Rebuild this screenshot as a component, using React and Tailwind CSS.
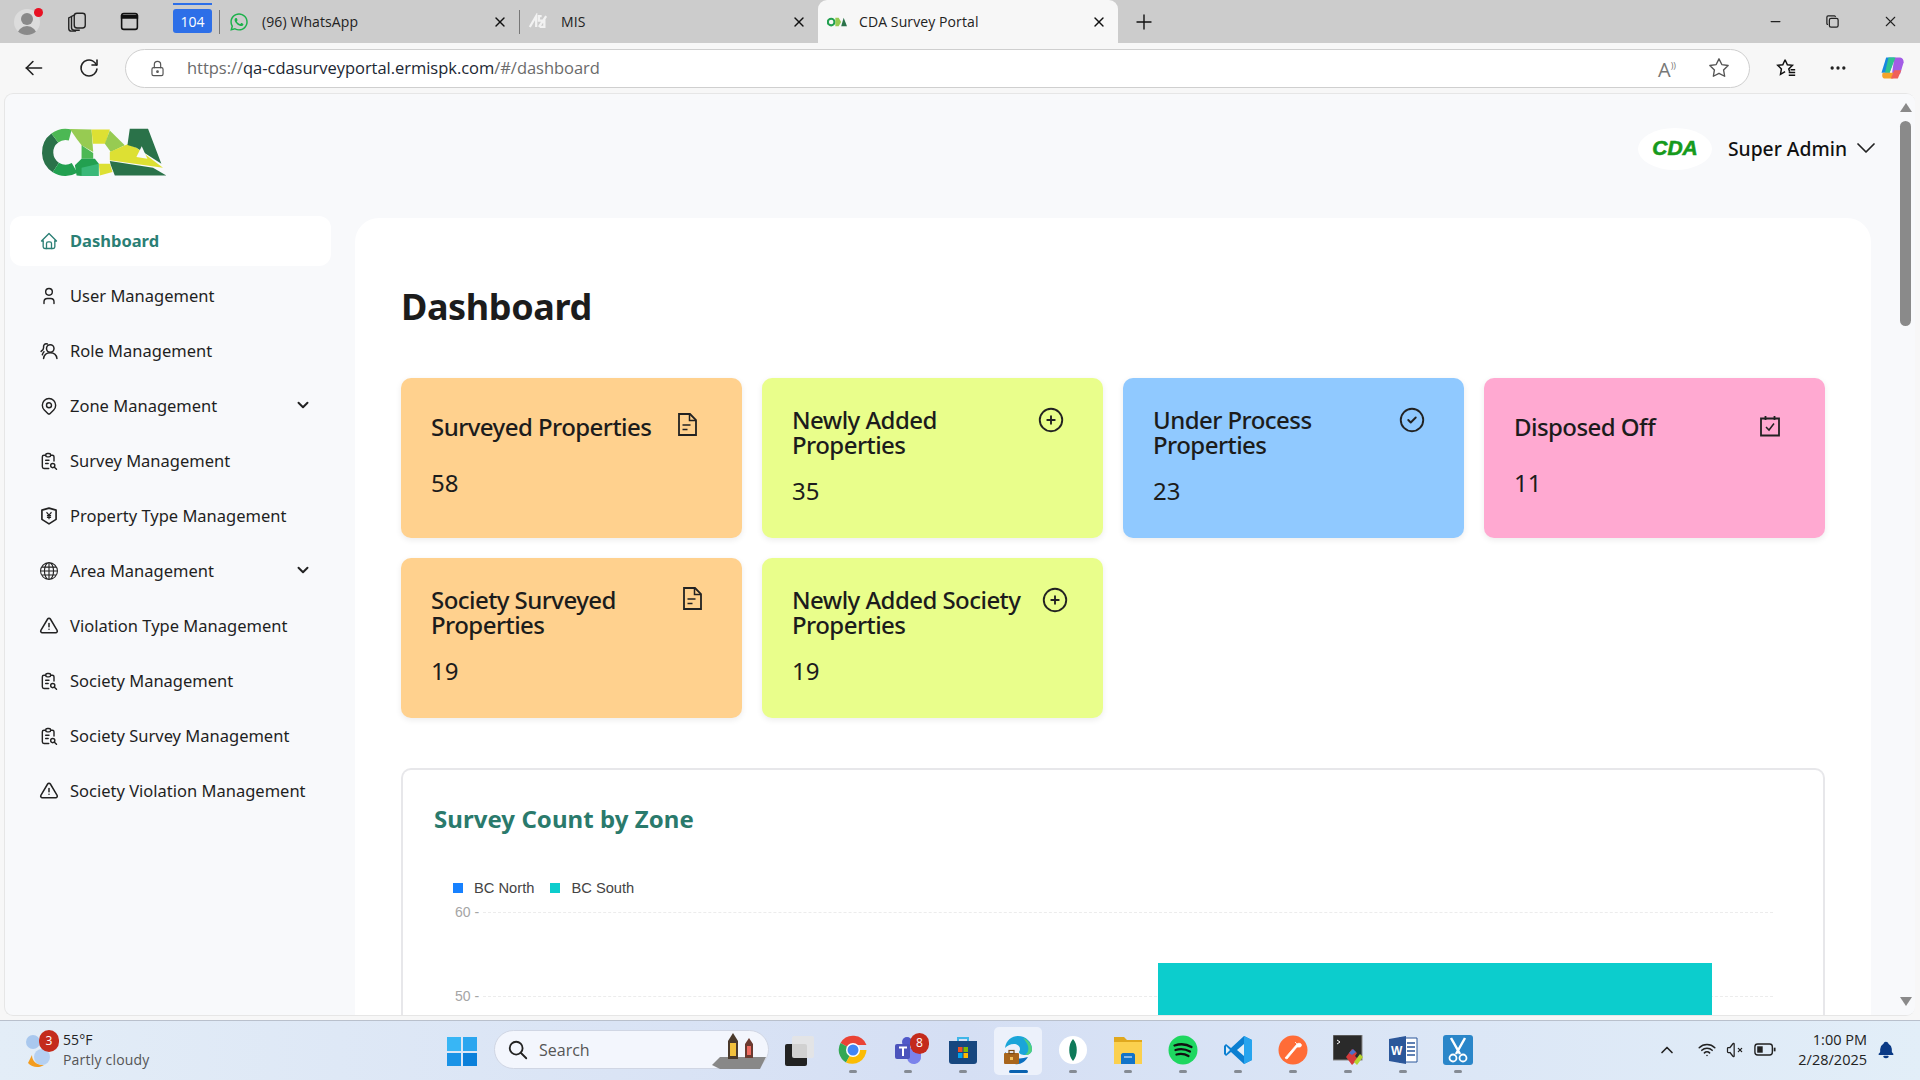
import React from "react";
import { TbHome, TbUser, TbMapPin, TbReportSearch, TbAlertTriangle, TbCirclePlus, TbCircleCheck, TbChevronDown, TbSearch, TbChevronUp, TbWifi, TbVolume3, TbBellFilled, TbStar, TbDots, TbReload, TbArrowLeft, TbLock, TbX, TbPlus, TbMinus, TbCopy } from "react-icons/tb";
import { BsGlobe } from "react-icons/bs";
import { FaWhatsapp } from "react-icons/fa";

const arc = (a1, a2, r = 54, cx = 132, cy = 126) => {
  const p = (a) => [cx + r * Math.cos((a * Math.PI) / 180), cy + r * Math.sin((a * Math.PI) / 180)];
  const [x1, y1] = p(a1);
  const [x2, y2] = p(a2);
  return `M${x1} ${y1}A${r} ${r} 0 ${Math.abs(a2 - a1) > 180 ? 1 : 0} 1 ${x2} ${y2}`;
};

function Logo() {
  return (
    <svg viewBox="55 50 385 150" className="w-[128px] h-[50px]">
      <path d={arc(123, 233)} fill="none" stroke="#2a7249" strokeWidth="34" />
      <path d={arc(233, 285)} fill="none" stroke="#4cb854" strokeWidth="34" />
      <path d={arc(60, 123)} fill="none" stroke="#22a050" strokeWidth="34" />
      <polygon points="145,56 210,57 215,125 180,105 165,85" fill="#97cb52" />
      <polygon points="180,105 215,128 215,145 180,145" fill="#4cb854" />
      <polygon points="160,165 180,145 220,145 232,160 180,197 165,196" fill="#22a050" />
      <polygon points="180,172 232,160 232,197 180,197" fill="#3ab878" />
      <polygon points="210,57 265,57 252,100 214,100" fill="#dde033" />
      <polygon points="265,60 310,105 268,125 250,100" fill="#97cb52" />
      <polygon points="232,160 265,160 273,185 235,196" fill="#dde033" />
      <polygon points="265,125 318,102 345,112 425,172 265,150" fill="#dde033" />
      <polygon points="325,55 380,55 420,160 345,112 318,104" fill="#2a7249" />
      <polygon points="265,152 395,172 435,196 325,196 280,196 268,165" fill="#2a7249" />
      <polygon points="345,140 378,145 361,108" fill="#f8f9fb" />
    </svg>
  );
}

function ShieldYen() {
  return (
    <svg viewBox="0 0 24 24" className="w-[20px] h-[20px]" fill="none" stroke="#222" strokeWidth="2" strokeLinejoin="round">
      <path d="M3.5 5 12 2.5 20.5 5v11L12 21.5 3.5 16z" />
      <path d="M9 7.5 12 11l3-3.5M12 11v5M9.5 11.5h5M9.5 13.7h5" strokeWidth="1.4" />
    </svg>
  );
}

function RoleIcon() {
  return (
    <svg viewBox="0 0 24 24" className="w-[20px] h-[20px]" fill="none" stroke="#222" strokeWidth="1.8" strokeLinecap="round">
      <circle cx="13.5" cy="9" r="4.5" />
      <path d="M5.500 21c.5-4.500 3.500-7 8-7s7.500 2.500 8 7" />
      <path d="M10 3.500C7 2.500 5 5 5.500 8c.2 1.500-1 3-3 4.500M6 13c-1 1-1.500 2-2 3.500" />
    </svg>
  );
}

function DocIcon() {
  return (
    <svg viewBox="0 0 19 23" className="w-[19px] h-[23px]" fill="none" stroke="#222" strokeWidth="1.800">
      <path d="M1 1h11l6 6v15H1z" />
      <path d="M11.500 1v6.500H18" strokeWidth="1.500" />
      <path d="M4.500 12h8M4.500 16.500h5" strokeWidth="1.600" />
    </svg>
  );
}

function CalCheck() {
  return (
    <svg viewBox="0 0 24 24" className="w-[24px] h-[24px]" fill="none" stroke="#222" strokeWidth="1.8">
      <path d="M3 4.500h18v17H3zM7.500 2v4M16.500 2v4" />
      <path d="m8 13 3 3 5-6.500" strokeWidth="1.5" />
    </svg>
  );
}

const nav = [
  ["User Management", <TbUser size={24} color="#222" strokeWidth={1.7} />],
  ["Role Management", <RoleIcon />],
  ["Zone Management", <TbMapPin size={24} color="#222" strokeWidth={1.7} />, true],
  ["Survey Management", <TbReportSearch size={22} color="#222" strokeWidth={1.7} />],
  ["Property Type Management", <ShieldYen />],
  ["Area Management", <BsGlobe size={18} color="#222" />, true],
  ["Violation Type Management", <TbAlertTriangle size={22} color="#222" strokeWidth={1.8} />],
  ["Society Management", <TbReportSearch size={22} color="#222" strokeWidth={1.7} />],
  ["Society Survey Management", <TbReportSearch size={22} color="#222" strokeWidth={1.7} />],
  ["Society Violation Management", <TbAlertTriangle size={22} color="#222" strokeWidth={1.8} />],
];

function Card({ title, count, color, icon, iconClass, two }) {
  return (
    <div className={`h-[160px] rounded-[10px] shadow-[0_2px_6px_rgba(0,0,0,0.08)] px-[30px] flex flex-col ${color} ${two ? "pt-[29px]" : "pt-[36px]"}`}>
      <div className="flex justify-between items-start">
        <div className="text-[24px] leading-[25px] font-medium text-[#1c1c1c] tracking-[-0.55px]">{title}</div>
        <div className={iconClass}>{icon}</div>
      </div>
      <div className={`text-[24px] leading-[28px] text-[#1c1c1c] ${two ? "mt-[20px]" : "mt-[30px]"}`}>{count}</div>
    </div>
  );
}

function Tab({ icon, title, active, w }) {
  return (
    <div className={`h-[43px] flex items-center pr-[11px] ${w} ${active ? "bg-[#f7f7f7] rounded-t-[9px] pl-[8px]" : "pl-[8px]"}`}>
      <div className="w-[22px] flex justify-center shrink-0">{icon}</div>
      <div className={`flex-1 text-[14px] text-[#222] font-['Open_Sans',sans-serif] tracking-[0.1px] ${active ? "ml-[11px]" : "ml-[12px]"}`}>{title}</div>
      <TbX size={16} color="#111" />
    </div>
  );
}

function Dot({ on }) {
  return <div className={`h-[3px] rounded-full ${on ? "w-[19px] bg-[#0a62b0]" : "w-[8px] bg-[#858b94]"}`} />;
}

function TaskIcon({ children, active }) {
  return (
    <div className={`w-[48px] h-[48px] rounded-[5px] flex flex-col items-center justify-between pt-[8px] pb-[2px] mx-[3.500px] ${active ? "bg-[#ecf1fb]" : ""}`}>
      <div className="w-[30px] h-[30px] flex items-center justify-center relative">{children}</div>
      <Dot on={active} />
    </div>
  );
}

const Badge = ({ n, cls }) => (
  <div className={`absolute rounded-full bg-[#c42b1c] text-white text-[12px] flex items-center justify-center font-['Open_Sans',sans-serif] ${cls}`}>{n}</div>
);

export default function App() {
  return (
    <div className="w-[1920px] h-[1080px] overflow-hidden flex flex-col font-['Noto_Sans',sans-serif] bg-[#f7f7f7]">
      {/* Tab strip */}
      <div className="h-[43px] bg-[#cccccc] flex shrink-0">
        <div className="w-[173px] flex items-center pl-[14px] shrink-0">
          <div className="relative w-[26px] h-[26px] shrink-0">
            <div className="w-[26px] h-[26px] rounded-full bg-[#dcdcdc] overflow-hidden">
              <div className="w-[12px] h-[12px] rounded-full bg-[#8a8a8a] mx-auto mt-[4px]" />
              <div className="w-[20px] h-[12px] rounded-t-full bg-[#8a8a8a] mx-auto mt-[1px]" />
            </div>
            <div className="absolute w-[9px] h-[9px] rounded-full bg-[#e81123] left-[20px] -top-[1px]" />
          </div>
          <svg viewBox="0 0 24 24" className="w-[22px] h-[22px] ml-[26px] shrink-0" fill="none" stroke="#222" strokeWidth="1.5"><rect x="9" y="2.500" width="12" height="16" rx="3" /><path d="M9 4.500 6 6v12a3 3 0 0 0 3 3h6" /><path d="M6 6 3 7.500V19a3 3 0 0 0 3 3h5" /></svg>
          <svg viewBox="0 0 24 24" className="w-[21px] h-[21px] ml-[31px] shrink-0" fill="none" stroke="#111" strokeWidth="1.8"><rect x="3" y="3" width="18" height="18" rx="2.500" /><path d="M3 5.500h18V8H3z" fill="#111" /></svg>
        </div>
        <div className="w-[39px] shrink-0 pt-[3px]">
          <div className="h-[2px] bg-[#2d6fe8]" />
          <div className="mt-[4px] h-[24px] bg-[#2d6fe8] rounded-[3px] flex items-center justify-center text-[14px] text-white font-['Open_Sans',sans-serif]">104</div>
        </div>
        <div className="w-[8px] flex items-center shrink-0 pl-[7px]"><div className="w-px h-[24px] bg-[#777] shrink-0" /></div>
        <Tab w="w-[299px]" title="(96) WhatsApp" icon={<FaWhatsapp size={20} color="#1bb14a" />} />
        <div className="w-0 flex items-center shrink-0"><div className="w-px h-[24px] bg-[#777] shrink-0" /></div>
        <Tab w="w-[299px]" title="MIS" icon={
          <svg viewBox="0 0 22 18" className="w-[20px] h-[17px]" fill="none" stroke="#f2f2f2" strokeWidth="2.500"><path d="M2 15 9 3v12M12 15l8-12M15 3h-3v5h6v7h-5" /></svg>
        } />
        <Tab active w="w-[300px]" title="CDA Survey Portal" icon={
          <svg viewBox="0 0 24 12" className="w-[20px] h-[10px]"><circle cx="5" cy="6" r="4" fill="none" stroke="#22a050" strokeWidth="2.500" /><path d="M10 1h4l3 5-3 5h-4z" fill="#97cb52" /><path d="M17 11 20 1l4 10z" fill="#2a7249" /></svg>
        } />
        <div className="ml-[14px] flex items-center"><TbPlus size={24} color="#111" strokeWidth={1.4} /></div>
        <div className="flex-1" />
        <div className="flex items-center pr-[21px] gap-[42px]">
          <TbMinus size={15} color="#222" />
          <TbCopy size={15} color="#222" />
          <TbX size={17} color="#222" strokeWidth={1.5} />
        </div>
      </div>

      {/* Address row */}
      <div className="h-[50px] flex items-center shrink-0 bg-[#f7f7f7]">
        <div className="w-[125px] flex items-center pl-[21px] gap-[30px] shrink-0">
          <TbArrowLeft size={26} color="#222" strokeWidth={1.5} />
          <TbReload size={24} color="#222" strokeWidth={1.6} />
        </div>
        <div className="w-[1625px] h-[39px] rounded-full bg-white border border-[#cfcfcf] flex items-center pl-[22px] pr-[19px] shrink-0">
          <TbLock size={19} color="#555" strokeWidth={1.5} />
          <div className="ml-[20px] flex-1 text-[16.500px] tracking-[-0.03px] font-['Open_Sans',sans-serif] text-[#6b6b6b]">https://<span className="text-[#1c2733]">qa-cdasurveyportal.ermispk.com</span>/#/dashboard</div>
          <div className="text-[20px] leading-[20px] text-[#777] mr-[32px] font-['Open_Sans',sans-serif]">A<span className="text-[9px] align-super">))</span></div>
          <TbStar size={22} color="#555" strokeWidth={1.5} />
        </div>
        <div className="flex-1 flex items-center justify-between pl-[25px] pr-[14px]">
          <svg viewBox="0 0 24 24" className="w-[22px] h-[22px]" fill="none" stroke="#111" strokeWidth="1.6"><path d="M11 3l2.500 5.500 5.500.5-4 4 1 3M11 3 8.500 8.500 3 9l4 4-1 6 5-3" /><path d="M15 17h7M15 20h7M17 14h5" /></svg>
          <TbDots size={20} color="#222" />
          <svg viewBox="0 0 24 24" className="w-[28px] h-[28px]"><path d="M7 3h7l-4 13H3z" fill="#1688e0" /><path d="M14 3h5c2 0 3 2 3 4l-3 10h-7z" fill="#a35ce6" /><path d="M9 3h6l-5 13-4 0z" fill="#2fc28f" /><path d="M4 16h11l-2 5H6c-2 0-3-2-2-5z" fill="#f4a32a" /><path d="M14 14h6l-3 7h-6z" fill="#f0605a" /></svg>
        </div>
      </div>

      {/* Page */}
      <div className="flex-1 min-h-0 pl-[4px] pr-[5px] pb-[4px] bg-[#f7f7f7]">
        <div className="h-full flex overflow-hidden rounded-[9px] border border-[#e6e6e6] border-r-0 bg-[#f8f9fb]">
          <aside className="w-[350px] shrink-0">
            <div className="h-[122px] pl-[35px] pt-[33px]"><Logo /></div>
            <nav className="pl-[5px] flex flex-col gap-[5px] text-[16.500px] text-[#1f1f1f]">
              <div className="w-[321px] h-[50px] rounded-[12px] bg-white flex items-center pl-[29px] gap-[11px]">
                <div className="w-[20px] flex justify-center"><TbHome size={24} color="#2b7f75" strokeWidth={1.6} /></div>
                <span className="font-bold text-[#2b7f75] mt-[1px]">Dashboard</span>
              </div>
              {nav.map(([label, icon, chev]) => (
                <div key={label} className="w-[321px] h-[50px] flex items-center pl-[29px] gap-[11px]">
                  <div className="w-[20px] flex justify-center">{icon}</div>
                  <span className="flex-1 mt-[1px]">{label}</span>
                  {chev && <TbChevronDown size={18} color="#222" strokeWidth={2.600} className="mr-[19px] -mt-[3px]" />}
                </div>
              ))}
            </nav>
          </aside>
          <main className="flex-1 min-w-0 flex flex-col">
            <div className="h-[124px] shrink-0 flex items-start justify-end -mr-[11px] pt-[34px]">
              <div className="w-[74px] h-[42px] rounded-[50%] bg-white flex items-center justify-center pb-[3px] text-[21px] font-bold italic font-['Liberation_Sans',sans-serif] text-[#169a1c] [-webkit-text-stroke:0.6px_#169a1c]">CDA</div>
              <div className="ml-[16px] text-[19.300px] font-medium text-[#111] mt-[7px]">Super Admin</div>
              <TbChevronDown size={32} color="#222" strokeWidth={1.3} className="ml-[3px] mt-[4px]" />
            </div>
            <div className="flex-1 bg-white rounded-t-[24px] px-[46px] overflow-hidden">
              <h1 className="text-[36px] leading-[46px] font-bold text-[#1c1c1c] mt-[66px] tracking-[-0.4px]">Dashboard</h1>
              <div className="grid grid-cols-4 gap-[20px] mt-[48px]">
                <Card title="Surveyed Properties" count="58" color="bg-[#ffd18e]" iconClass="mr-[15px] -mt-[1px]" icon={<DocIcon />} />
                <Card two title={<>Newly Added<br />Properties</>} count="35" color="bg-[#e9fe8b]" iconClass="mr-[7px] -mt-[2px]" icon={<TbCirclePlus size={30} color="#222" strokeWidth={1.5} />} />
                <Card two title={<>Under Process<br />Properties</>} count="23" color="bg-[#90c9ff]" iconClass="mr-[7px] -mt-[2px]" icon={<TbCircleCheck size={30} color="#222" strokeWidth={1.5} />} />
                <Card title="Disposed Off" count="11" color="bg-[#ffa9d1]" iconClass="mr-[13px] mt-0" icon={<CalCheck />} />
                <Card two title={<>Society Surveyed<br />Properties</>} count="19" color="bg-[#ffd18e]" iconClass="mr-[10px]" icon={<DocIcon />} />
                <Card two title={<>Newly Added Society<br />Properties</>} count="19" color="bg-[#e9fe8b]" iconClass="mr-[3px] -mt-[2px]" icon={<TbCirclePlus size={30} color="#222" strokeWidth={1.5} />} />
              </div>
              <div className="mt-[50px] rounded-t-[10px] border-2 border-b-0 border-[#e7e7ea] h-[400px] pl-[31px] pt-[32px]">
                <h2 className="text-[24px] leading-[34px] font-bold text-[#2a7a6c] tracking-[0.05px]">Survey Count by Zone</h2>
                <div className="mt-[43px] ml-[19px] flex items-center text-[14.700px] leading-[18px] text-[#444] font-['Liberation_Sans',sans-serif]">
                  <div className="w-[10px] h-[10px] bg-[#1781ff]" />
                  <span className="ml-[11px]">BC North</span>
                  <div className="w-[10px] h-[10px] bg-[#0ccdcd] ml-[16px]" />
                  <span className="ml-[11px]">BC South</span>
                </div>
                <div className="mt-[6px] ml-[21px] mr-[50px] relative text-[14px] text-[#a5a5a5] font-['Liberation_Sans',sans-serif]">
                  <div className="flex items-center h-[18px]">
                    <span>60 -</span>
                    <div className="flex-1 ml-[4px] border-t border-dashed border-[#ececec]" />
                  </div>
                  <div className="flex items-center h-[18px] mt-[66px]">
                    <span>50 -</span>
                    <div className="flex-1 ml-[4px] border-t border-dashed border-[#ececec]" />
                  </div>
                  <div className="absolute left-[703px] top-[60px] w-[554px] h-[100px] bg-[#0ccdcd]" />
                </div>
              </div>
            </div>
          </main>
          <div className="w-[44px] shrink-0 flex">
            <div className="flex-1" />
            <div className="w-[19px] bg-[#f8f9fb] flex flex-col items-center pt-[9px]">
              <div className="w-0 h-0 border-x-[6px] border-x-transparent border-b-[9px] border-b-[#8a8a8a]" />
              <div className="w-[11px] h-[205px] rounded-full bg-[#8a8a8a] mt-[9px]" />
              <div className="flex-1" />
              <div className="w-0 h-0 border-x-[6px] border-x-transparent border-t-[9px] border-t-[#8a8a8a] mb-[9px]" />
            </div>
          </div>
        </div>
      </div>

      {/* Taskbar */}
      <div className="h-[60px] shrink-0 border-t border-[#b9c0cc] bg-gradient-to-r from-[#e3edf7] via-[#d5dff4] to-[#e2eef8] flex items-center relative font-['Open_Sans',sans-serif]">
        <div className="w-[447px] flex items-center pl-[24px] shrink-0">
          <div className="relative w-[36px] h-[40px]">
            <svg viewBox="0 0 36 40" className="w-[36px] h-[40px]"><path d="M4 32c4 5 12 5 16 2-8 0-12-4-12-10z" fill="#f39c1f" /><circle cx="9" cy="11" r="7" fill="#a9c8ee" /><circle cx="18" cy="26" r="8" fill="#b5d0f2" /></svg>
            <Badge n="3" cls="w-[20px] h-[22px] left-[15px] -top-[1px]" />
          </div>
          <div className="ml-[3px] text-[14px] leading-[20px] text-[#222] -mt-[2px]">
            <div className="tracking-[0.1px]">55°F</div>
            <div className="text-[#555] tracking-[0.2px]">Partly cloudy</div>
          </div>
        </div>
        <svg viewBox="0 0 30 30" className="w-[30px] h-[30px] shrink-0"><path d="M0 1h14v14H0z" fill="#38b6f5" /><path d="M16 1h14v14H16z" fill="#2ba6ef" /><path d="M0 17h14v13H0z" fill="#1a93e6" /><path d="M16 17h14v13H16z" fill="#0b80da" /></svg>
        <div className="ml-[17px] w-[275px] h-[39px] rounded-full bg-[#f3f6fd] border border-[#d0d6e4] flex items-center pl-[12px] relative shrink-0 -mt-[2px]">
          <TbSearch size={22} color="#222" />
          <span className="ml-[10px] text-[16px] text-[#555]">Search</span>
          <svg viewBox="0 0 60 44" className="absolute right-0 -top-[4px] w-[60px] h-[44px]"><path d="M4 38 12 30h46l-6 12H12z" fill="#888" /><path d="M20 14l5-8 5 8v18H20z" fill="#4a3a2c" /><rect x="22" y="16" width="6" height="13" fill="#f2c13d" /><path d="M37 17l4-6 4 6v14h-8z" fill="#6a3a30" /><rect x="39" y="19" width="4" height="9" fill="#ee6a60" /></svg>
        </div>
        <div className="ml-[11px] w-[40px] flex items-center justify-center shrink-0">
          <div className="relative w-[30px] h-[30px]">
            <div className="absolute left-0 top-[8px] w-[22px] h-[22px] bg-[#222] rounded-[2px]" />
            <div className="absolute left-[7px] top-0 w-[22px] h-[22px] bg-[#e4e4e4]/90 rounded-[2px]" />
          </div>
        </div>
        <div className="flex ml-[5.500px]">
          <TaskIcon>
            <svg viewBox="0 0 30 30" className="w-[30px] h-[30px]"><path d="M15 15 2.500 8A14.500 14.500 0 0 1 28.500 10H15z" fill="#ea4335" /><path d="M15 15 8 27.500A14.500 14.500 0 0 1 2.500 8z" fill="#34a853" /><path d="M15 15h13.500A14.500 14.500 0 0 1 8 27.500z" fill="#fbbc05" /><circle cx="15" cy="15" r="7" fill="#fff" /><circle cx="15" cy="15" r="5.500" fill="#4285f4" /></svg>
          </TaskIcon>
          <TaskIcon>
            <svg viewBox="0 0 30 30" className="w-[30px] h-[30px]"><circle cx="22" cy="9" r="4" fill="#7b83eb" /><path d="M13 13h15v8a7 7 0 0 1-14 2z" fill="#7b83eb" /><circle cx="14" cy="7" r="5" fill="#5059c9" /><rect x="2" y="9" width="15" height="15" rx="2" fill="#4b53bc" /><path d="M6 12.500h8M10 12.500V21" stroke="#fff" strokeWidth="2" /></svg>
            <Badge n="8" cls="w-[19px] h-[21px] left-[17px] -top-[2px]" />
          </TaskIcon>
          <TaskIcon>
            <svg viewBox="0 0 30 30" className="w-[30px] h-[30px]"><path d="M10 7V3h10v4" fill="none" stroke="#3fb6e8" strokeWidth="2" /><path d="M1 6h28v20a3 3 0 0 1-3 3H4a3 3 0 0 1-3-3z" fill="#17477f" /><rect x="10" y="12" width="4.500" height="5" fill="#f25022" /><rect x="15.500" y="12" width="4.500" height="5" fill="#7fba00" /><rect x="10" y="18" width="4.500" height="5" fill="#00a4ef" /><rect x="15.500" y="18" width="4.500" height="5" fill="#ffb900" /></svg>
          </TaskIcon>
          <TaskIcon active>
            <svg viewBox="0 0 30 30" className="w-[30px] h-[30px]"><path d="M2 13C3 5 9 1 15 1c8 0 14 6 14 13 0 4-3 6-7 6-3 0-6-1-6-3 0-1 1-1 1-3 0-3-3-5-6-5-4 0-7 2-9 4z" fill="#1aa5d9" /><path d="M20 3c5 2 9 6 9 11 0 4-3 6-7 6 3-2 4-5 3-9-1-3-3-6-5-8z" fill="#4fd17e" /><path d="M12 29c-5-1-10-5-10-12 3 3 6 4 9 4 2 3 7 3 14 1-3 5-8 8-13 7z" fill="#0b6fc0" /><rect x="1" y="18" width="15" height="11" rx="1" fill="#a8651c" /><rect x="6" y="15.500" width="5" height="3" fill="none" stroke="#7a4a14" strokeWidth="1.200" /><rect x="7" y="22" width="3" height="3" fill="#f4c15c" /></svg>
          </TaskIcon>
          <TaskIcon>
            <svg viewBox="0 0 30 30" className="w-[30px] h-[30px]"><circle cx="15" cy="15" r="14" fill="#fff" /><path d="M15 4c5 5 5 17 0 22-5-5-5-17 0-22z" fill="#0f7a5a" /></svg>
          </TaskIcon>
          <TaskIcon>
            <svg viewBox="0 0 30 30" className="w-[30px] h-[30px]"><path d="M1 2h10l3 3h15v4H1z" fill="#e0a81e" /><path d="M1 7h28v22H1z" fill="#fbd04e" /><path d="M8 20c0-1 1-2 2-2h10c1 0 2 1 2 2v9H8z" fill="#1173c9" /><path d="M11 22h8" stroke="#fff" /></svg>
          </TaskIcon>
          <TaskIcon>
            <svg viewBox="0 0 30 30" className="w-[30px] h-[30px]"><circle cx="15" cy="15" r="14.500" fill="#1ed760" /><path d="M6.500 10.500c6-2 12-1.500 17 1.500M7.500 15c5-1.500 10-1 14.500 1.500M8.500 19.500c4-1 8.500-.5 12 1.500" fill="none" stroke="#111" strokeWidth="2.300" strokeLinecap="round" /></svg>
          </TaskIcon>
          <TaskIcon>
            <svg viewBox="0 0 30 30" className="w-[30px] h-[30px]"><path d="M21 1 29 5v20l-8 4L8 17l-5 4-2-2v-8l2-2 5 4z" fill="#0b7fd1" /><path d="M21 1 29 5v20l-8 4z" fill="#26a4ee" /><path d="m21 9-7 6 7 6z" fill="#e2eef8" /><path d="m3 11 4 4-4 4z" fill="#e2eef8" /></svg>
          </TaskIcon>
          <TaskIcon>
            <svg viewBox="0 0 30 30" className="w-[30px] h-[30px]"><circle cx="15" cy="15" r="14.500" fill="#ff6c37" /><path d="M7 23 19 9c1-1 3-1 4 0s0 3-1 3H19L9 24zM19 9l-2-2" fill="#fff" stroke="#fff" strokeWidth=".8" /></svg>
          </TaskIcon>
          <TaskIcon>
            <svg viewBox="0 0 30 30" className="w-[30px] h-[30px]"><rect x="0" y="0" width="29" height="25" fill="#2a2a2a" stroke="#888" /><path d="M4 5l3 2-3 2" stroke="#fff" fill="none" /><path d="m13 22 6-8 5 4-2 3 3 3-6 6z" fill="#d63b3b" /><path d="m21 27 6-8 3 3-6 8z" fill="#b6d431" /><path d="m16 18 4-4 3 3-4 3z" fill="#4a6fc9" /></svg>
          </TaskIcon>
          <TaskIcon>
            <svg viewBox="0 0 30 30" className="w-[30px] h-[30px]"><path d="M11 3h18v24H11z" fill="#fff" stroke="#2b579a" /><path d="M19 8h8M19 12h8M19 16h8M19 20h8" stroke="#2b579a" strokeWidth="1.500" /><path d="M1 4l17-3v28L1 26z" fill="#2b579a" /><text x="3" y="20" fontSize="12" fontWeight="700" fill="#fff" fontFamily="Liberation Sans">W</text></svg>
          </TaskIcon>
          <TaskIcon>
            <svg viewBox="0 0 30 30" className="w-[30px] h-[30px]"><rect width="30" height="30" rx="3" fill="#2a86c9" /><path d="M8 3l9 16M22 3 13 19" stroke="#fff" strokeWidth="2.500" /><circle cx="10" cy="23" r="3.500" fill="none" stroke="#fff" strokeWidth="1.800" /><circle cx="20" cy="23" r="3.500" fill="none" stroke="#fff" strokeWidth="1.800" /></svg>
          </TaskIcon>
        </div>
        <div className="flex-1" />
        <div className="flex items-center pr-[24px] -mt-[2px]">
          <TbChevronUp size={20} color="#222" />
          <TbWifi size={22} color="#222" className="ml-[19px]" strokeWidth={1.7} />
          <TbVolume3 size={20} color="#222" className="ml-[7px]" strokeWidth={1.5} />
          <svg viewBox="0 0 24 14" className="w-[22px] h-[13px] ml-[9px]" fill="none" stroke="#222" strokeWidth="1.500"><rect x="1" y="1" width="19" height="12" rx="3" /><rect x="3.500" y="3.500" width="6" height="7" fill="#222" stroke="none" /><path d="M22.500 5v4" strokeWidth="2" /></svg>
          <div className="ml-[21px] w-[70px] text-right text-[14.500px] leading-[20px] text-[#222] whitespace-nowrap">
            <div>1:00 PM</div>
            <div>2/28/2025</div>
          </div>
          <TbBellFilled size={20} color="#0a3a86" className="ml-[9px]" />
        </div>
      </div>
    </div>
  );
}
